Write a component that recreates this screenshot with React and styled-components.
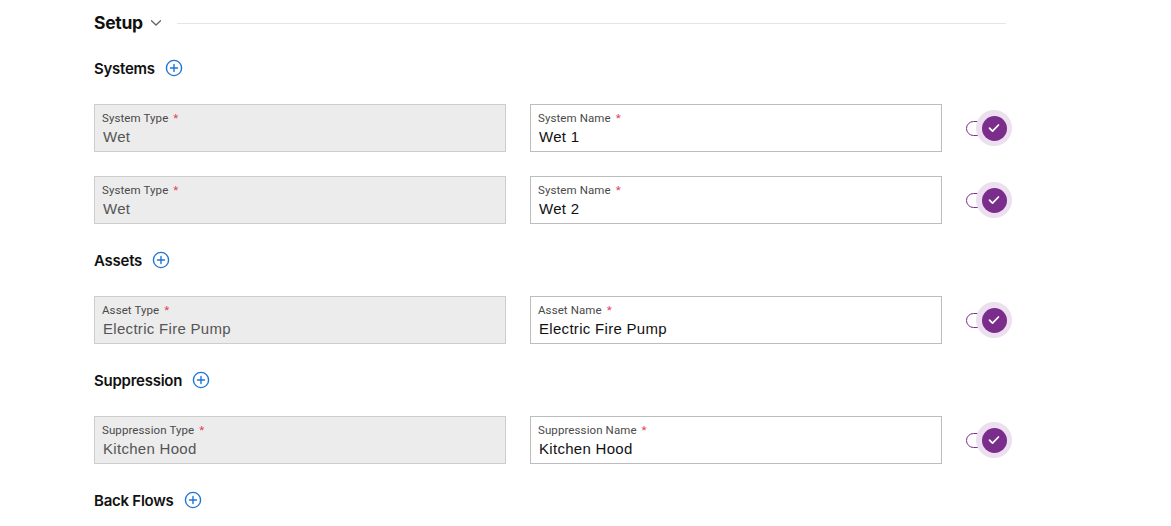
import React from 'react';
import styled, { createGlobalStyle } from 'styled-components';

const GlobalStyle = createGlobalStyle`
    body {
        margin: 0;
        background: #fff;
        font-family: Inter, 'Noto Sans', sans-serif;
        color: #111;
    }
`;

const sections = [
    {
        title: 'Systems',
        typeLabel: 'System Type',
        nameLabel: 'System Name',
        rows: [
            { type: 'Wet', name: 'Wet 1' },
            { type: 'Wet', name: 'Wet 2' },
        ],
    },
    {
        title: 'Assets',
        typeLabel: 'Asset Type',
        nameLabel: 'Asset Name',
        rows: [{ type: 'Electric Fire Pump', name: 'Electric Fire Pump' }],
    },
    {
        title: 'Suppression',
        typeLabel: 'Suppression Type',
        nameLabel: 'Suppression Name',
        rows: [{ type: 'Kitchen Hood', name: 'Kitchen Hood' }],
    },
    { title: 'Back Flows', rows: [] },
];

const AddIcon = () => (
    <svg width="18" height="18" viewBox="0 0 18 18" fill="none">
        <circle cx="9" cy="9" r="7.6" stroke="#1f74d6" strokeWidth="1.4" />
        <path d="M9 5.5v7M5.5 9h7" stroke="#1f74d6" strokeWidth="1.4" strokeLinecap="round" />
    </svg>
);

const Chevron = () => (
    <svg width="12" height="8" viewBox="0 0 12 8" fill="none">
        <path d="M1.5 1.8L6 6l4.5-4.2" stroke="#666" strokeWidth="1.3" strokeLinecap="round" />
    </svg>
);

const Field = ({ label, value, disabled }) => (
    <FieldBox disabled={disabled}>
        <Label>
            {label} <Req>*</Req>
        </Label>
        <Value disabled={disabled}>{value}</Value>
    </FieldBox>
);

const Toggle = () => (
    <Switch>
        <Track />
        <Halo>
            <Thumb>
                <svg width="12" height="10" viewBox="0 0 12 10" fill="none">
                    <path d="M1.5 5.2l3 3 6-6.2" stroke="#fff" strokeWidth="1.7" strokeLinecap="round" strokeLinejoin="round" />
                </svg>
            </Thumb>
        </Halo>
    </Switch>
);

export default function App() {
    return (
        <Page>
            <GlobalStyle />
            <SetupHeader>
                <SetupTitle>Setup</SetupTitle>
                <Chevron />
                <Rule />
            </SetupHeader>
            {sections.map((s) => (
                <Section key={s.title}>
                    <SectionHeader>
                        <SectionTitle>{s.title}</SectionTitle>
                        <AddIcon />
                    </SectionHeader>
                    {s.rows.map((r, i) => (
                        <Row key={i}>
                            <Field label={s.typeLabel} value={r.type} disabled />
                            <Field label={s.nameLabel} value={r.name} />
                            <Toggle />
                        </Row>
                    ))}
                </Section>
            ))}
        </Page>
    );
}

const Page = styled.div`
    padding: 8px 0 0 94px;
    width: 912px;
    display: flex;
    flex-direction: column;
`;
const SetupHeader = styled.div`
    display: flex;
    align-items: center;
    height: 28px;
    margin-bottom: 20px;
    svg {
        margin: 2px 0 0 7px;
    }
`;
const SetupTitle = styled.h2`
    margin: 0;
    font-size: 17.5px;
    font-weight: 700;
    letter-spacing: -0.3px;
`;
const Rule = styled.div`
    flex: 1;
    height: 1px;
    background: #e6e6e6;
    margin: 2px 0 0 15px;
`;
const Section = styled.div`
    display: flex;
    flex-direction: column;
    gap: 24px;
    margin-bottom: 24px;
`;
const SectionHeader = styled.div`
    display: flex;
    align-items: center;
    gap: 10px;
    height: 24px;
`;
const SectionTitle = styled.h3`
    margin: 0;
    font-size: 15px;
    font-weight: 600;
    letter-spacing: -0.25px;
`;
const Row = styled.div`
    display: grid;
    grid-template-columns: 412px 412px 46px;
    column-gap: 24px;
    align-items: center;
`;
const FieldBox = styled.div`
    box-sizing: border-box;
    height: 48px;
    border: 1px solid ${(p) => (p.disabled ? '#cdcdcd' : '#bdbdbd')};
    background: ${(p) => (p.disabled ? '#ececec' : '#fff')};
    padding: 6px 7px 0 8px;
    display: flex;
    flex-direction: column;
    gap: 2px;
`;
const Label = styled.div`
    font-family: Roboto, 'Noto Sans', sans-serif;
    font-size: 11.5px;
    line-height: 14px;
    letter-spacing: 0.1px;
    color: #4a4a4a;
    margin-left: -1px;
`;
const Req = styled.span`
    color: #e0405a;
    margin-left: 2px;
`;
const Value = styled.div`
    font-family: 'Liberation Sans', Arial, sans-serif;
    font-size: 15px;
    line-height: 20px;
    letter-spacing: 0.3px;
    color: ${(p) => (p.disabled ? '#555' : '#111')};
`;
const Switch = styled.div`
    position: relative;
    width: 46px;
    height: 36px;
`;
const Track = styled.div`
    position: absolute;
    left: 0;
    top: 11px;
    width: 30px;
    height: 15px;
    box-sizing: border-box;
    border: 1.5px solid #7b2d8b;
    border-radius: 8px;
    background: #fff;
`;
const Halo = styled.div`
    position: absolute;
    left: 10px;
    top: 0;
    width: 36px;
    height: 36px;
    border-radius: 50%;
    background: #ecdff0;
    display: flex;
    align-items: center;
    justify-content: center;
`;
const Thumb = styled.div`
    width: 25px;
    height: 25px;
    border-radius: 50%;
    background: #7b2d8b;
    display: flex;
    align-items: center;
    justify-content: center;
`;
